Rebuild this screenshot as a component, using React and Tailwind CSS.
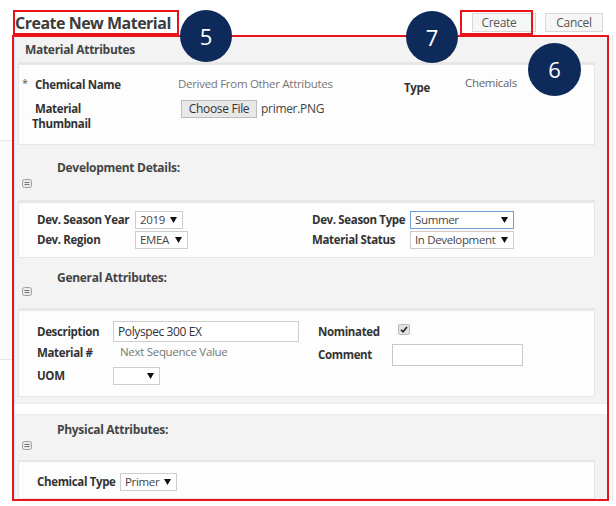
import React from "react";

const Tri = () => (
  <svg width="7" height="6" viewBox="0 0 7 6" className="shrink-0 ml-[4px]">
    <polygon points="0,0 7,0 3.5,6" fill="#111" />
  </svg>
);

const Sel = ({ w, children, focus }) => (
  <div
    className={`h-[18px] ${w} border ${
      focus ? "border-[#6f9fd6]" : "border-[#cdcdcd]"
    } bg-white flex items-center justify-between pl-[4px] pr-[5px] text-[11.5px] leading-none text-[#444] font-['Open_Sans',sans-serif] tracking-[-0.35px] whitespace-nowrap`}
  >
    <span>{children}</span>
    <Tri />
  </div>
);

const Collapse = () => (
  <svg width="10" height="9" viewBox="0 0 10 9">
    <rect x="0.5" y="0.5" width="9" height="8" rx="2" fill="#eaeaea" stroke="#a0a0a0" />
    <line x1="2.5" y1="3.5" x2="7.5" y2="3.5" stroke="#777" />
    <line x1="2.5" y1="5.5" x2="7.5" y2="5.5" stroke="#777" />
  </svg>
);

const Label = ({ children, className = "" }) => (
  <span className={`text-[11.5px] font-bold text-[#333] tracking-[-0.35px] whitespace-nowrap ${className}`}>{children}</span>
);

const Band = ({ title, h, pt, gap }) => (
  <div className={`${h} ${pt} shrink-0 flex flex-col`}>
    <div className="pl-[42px] h-[15px] flex items-center text-[12px] font-bold text-[#444] tracking-[-0.3px]">
      {title}
    </div>
    <div className={`pl-[7px] ${gap} flex`}>
      <Collapse />
    </div>
  </div>
);

const Circle = ({ n, cls }) => (
  <div
    className={`absolute ${cls} rounded-full bg-[#0d2a5b] text-white flex items-center justify-center text-[22px] font-['Open_Sans',sans-serif]`}
  >
    {n}
  </div>
);

export default function App() {
  return (
    <div className="relative w-[616px] h-[506px] bg-white overflow-hidden font-['Open_Sans',sans-serif]">
      {/* header row */}
      <div className="flex items-start h-[35px]">
        <div className="ml-[13px] mt-[10px] w-[166px] h-[25px] border-2 border-[#e8141a] flex items-center overflow-hidden">
          <span className="text-[16px] font-bold text-[#3c3c3c] tracking-[-0.5px] leading-none whitespace-nowrap">
            Create New Material
          </span>
        </div>
        <div className="ml-auto mr-[13px] mt-[13px] flex gap-[9px]">
          <div className="w-[64px] h-[19px] border border-[#d8d8d8] bg-[#f6f6f6] flex items-center justify-center pr-[10px] text-[12px] text-[#555] tracking-[-0.3px]">
            Create
          </div>
          <div className="w-[58px] h-[19px] border border-[#d8d8d8] bg-[#f6f6f6] flex items-center justify-center text-[12px] text-[#555] tracking-[-0.3px]">
            Cancel
          </div>
        </div>
      </div>

      {/* main row */}
      <div className="flex h-[466px]">
        <div className="w-[12px] shrink-0">
          <div className="mt-[105px] h-[220px] border-y border-[#e6e6e6] bg-[#fbfbfb]" />
        </div>
        <div className="w-[597px] h-[466px] shrink-0 border-2 border-[#e8141a]">
          <div className="h-full border-l border-[#cfe2f3] bg-[#f3f3f3] overflow-hidden flex flex-col">
            {/* Material Attributes */}
            <div className="h-[25px] shrink-0 pl-[10px] flex items-center text-[12px] font-bold text-[#444] tracking-[-0.3px]">
              Material Attributes
            </div>
            <div className="ml-[3px] w-[577px] h-[83px] shrink-0 bg-[#fdfdfd] border border-[#e6e6e6] border-t-[3px] pt-[12px]">
              <div className="flex h-[16px] items-center">
                <div className="w-[159px] pl-[3px] flex items-center">
                  <span className="text-[11px] text-[#555] w-[13px] -mt-[4px]">*</span>
                  <Label>Chemical Name</Label>
                </div>
                <div className="w-[226px] -mt-[3px] text-[11.5px] text-[#777] tracking-[-0.3px]">
                  Derived From Other Attributes
                </div>
                <div className="w-[61px] mt-[1px]">
                  <Label>Type</Label>
                </div>
                <div className="-mt-[5px] text-[11.5px] text-[#666] tracking-[-0.3px]">Chemicals</div>
              </div>
              <div className="flex mt-[7px]">
                <div className="w-[162px] pl-[13px] pt-[1px] flex flex-col leading-[15px]">
                  <Label className="pl-[3px]">Material</Label>
                  <Label>Thumbnail</Label>
                </div>
                <div className="flex items-start">
                  <div className="w-[76px] h-[18px] border border-[#bdbdbd] bg-[#e8e8e8] flex items-center justify-center text-[12px] text-[#333] tracking-[-0.3px]">
                    Choose File
                  </div>
                  <span className="ml-[4px] h-[18px] flex items-center text-[12px] text-[#444] tracking-[-0.3px]">
                    primer.PNG
                  </span>
                </div>
              </div>
            </div>

            <Band title="Development Details:" h="h-[55px]" pt="pt-[15px]" gap="mt-[4px]" />

            <div className="ml-[3px] w-[577px] h-[58px] shrink-0 bg-[#fdfdfd] border border-[#e6e6e6] border-t-[3px] pt-[8px] pl-[18px] flex">
              <div className="w-[275px] flex flex-col gap-[2px]">
                <div className="flex items-center h-[18px]">
                  <Label className="w-[98px]">Dev. Season Year</Label>
                  <Sel w="w-[48px]">2019</Sel>
                </div>
                <div className="flex items-center h-[18px]">
                  <Label className="w-[98px]">Dev. Region</Label>
                  <Sel w="w-[53px]">EMEA</Sel>
                </div>
              </div>
              <div className="flex flex-col gap-[2px]">
                <div className="flex items-center h-[18px]">
                  <Label className="w-[98px]">Dev. Season Type</Label>
                  <Sel w="w-[104px]" focus>
                    Summer
                  </Sel>
                </div>
                <div className="flex items-center h-[18px]">
                  <Label className="w-[98px]">Material Status</Label>
                  <Sel w="w-[104px]">In Development</Sel>
                </div>
              </div>
            </div>

            <Band title="General Attributes:" h="h-[50px]" pt="pt-[12px]" gap="mt-[2px]" />

            <div className="ml-[3px] w-[577px] h-[89px] shrink-0 bg-[#fdfdfd] border border-[#e6e6e6] border-t-[3px] pt-[10px] pl-[18px] flex">
              <div className="w-[281px] flex flex-col">
                <div className="flex items-center h-[21px]">
                  <Label className="w-[76px]">Description</Label>
                  <div className="w-[186px] h-[21px] border border-[#cdcdcd] bg-white flex items-center pl-[4px] text-[12px] text-[#333] tracking-[-0.4px]">
                    Polyspec 300 EX
                  </div>
                </div>
                <div className="flex items-center h-[14px] mt-[4px]">
                  <Label className="w-[83px]">Material #</Label>
                  <span className="-mt-[3px] text-[11.5px] text-[#777] tracking-[-0.3px]">Next Sequence Value</span>
                </div>
                <div className="flex items-center h-[18px] mt-[7px]">
                  <Label className="w-[76px]">UOM</Label>
                  <Sel w="w-[47px]"> </Sel>
                </div>
              </div>
              <div className="flex flex-col">
                <div className="flex items-center h-[21px]">
                  <Label className="w-[80px]">Nominated</Label>
                  <div className="w-[12px] h-[11px] -mt-[5px] rounded-[2px] border border-[#bbb] bg-[#e2e2e2] flex items-center justify-center">
                    <svg width="8" height="7" viewBox="0 0 8 7">
                      <path d="M1 3.8 L3 5.8 L7 1" fill="none" stroke="#222" strokeWidth="1.6" />
                    </svg>
                  </div>
                </div>
                <div className="flex items-center h-[22px] mt-[2px]">
                  <Label className="w-[74px]">Comment</Label>
                  <div className="w-[131px] h-[22px] border border-[#c8c8c8] bg-white" />
                </div>
              </div>
            </div>

            <div className="h-[6px] shrink-0" />
            <div className="h-[12px] shrink-0 bg-white border-y border-[#ececec]" />

            <Band title="Physical Attributes:" h="h-[45px]" pt="pt-[7px]" gap="mt-[4px]" />

            <div className="ml-[3px] w-[577px] flex-1 bg-[#fdfdfd] border border-[#e6e6e6] border-t-[2px] pt-[11px] pl-[18px]">
              <div className="flex items-center h-[18px]">
                <Label className="w-[83px]">Chemical Type</Label>
                <Sel w="w-[57px]">Primer</Sel>
              </div>
            </div>
          </div>
        </div>
        <div className="flex-1 ml-[3px] border-l border-[#e8e8e8]" />
      </div>

      {/* annotations */}
      <div className="absolute left-[460px] top-[10px] w-[73px] h-[25px] border-2 border-[#e8141a]" />
      <Circle n="5" cls="left-[180px] top-[10px] w-[52px] h-[52px]" />
      <Circle n="7" cls="left-[406px] top-[11px] w-[52px] h-[52px]" />
      <Circle n="6" cls="left-[528px] top-[43px] w-[53px] h-[53px]" />
    </div>
  );
}
